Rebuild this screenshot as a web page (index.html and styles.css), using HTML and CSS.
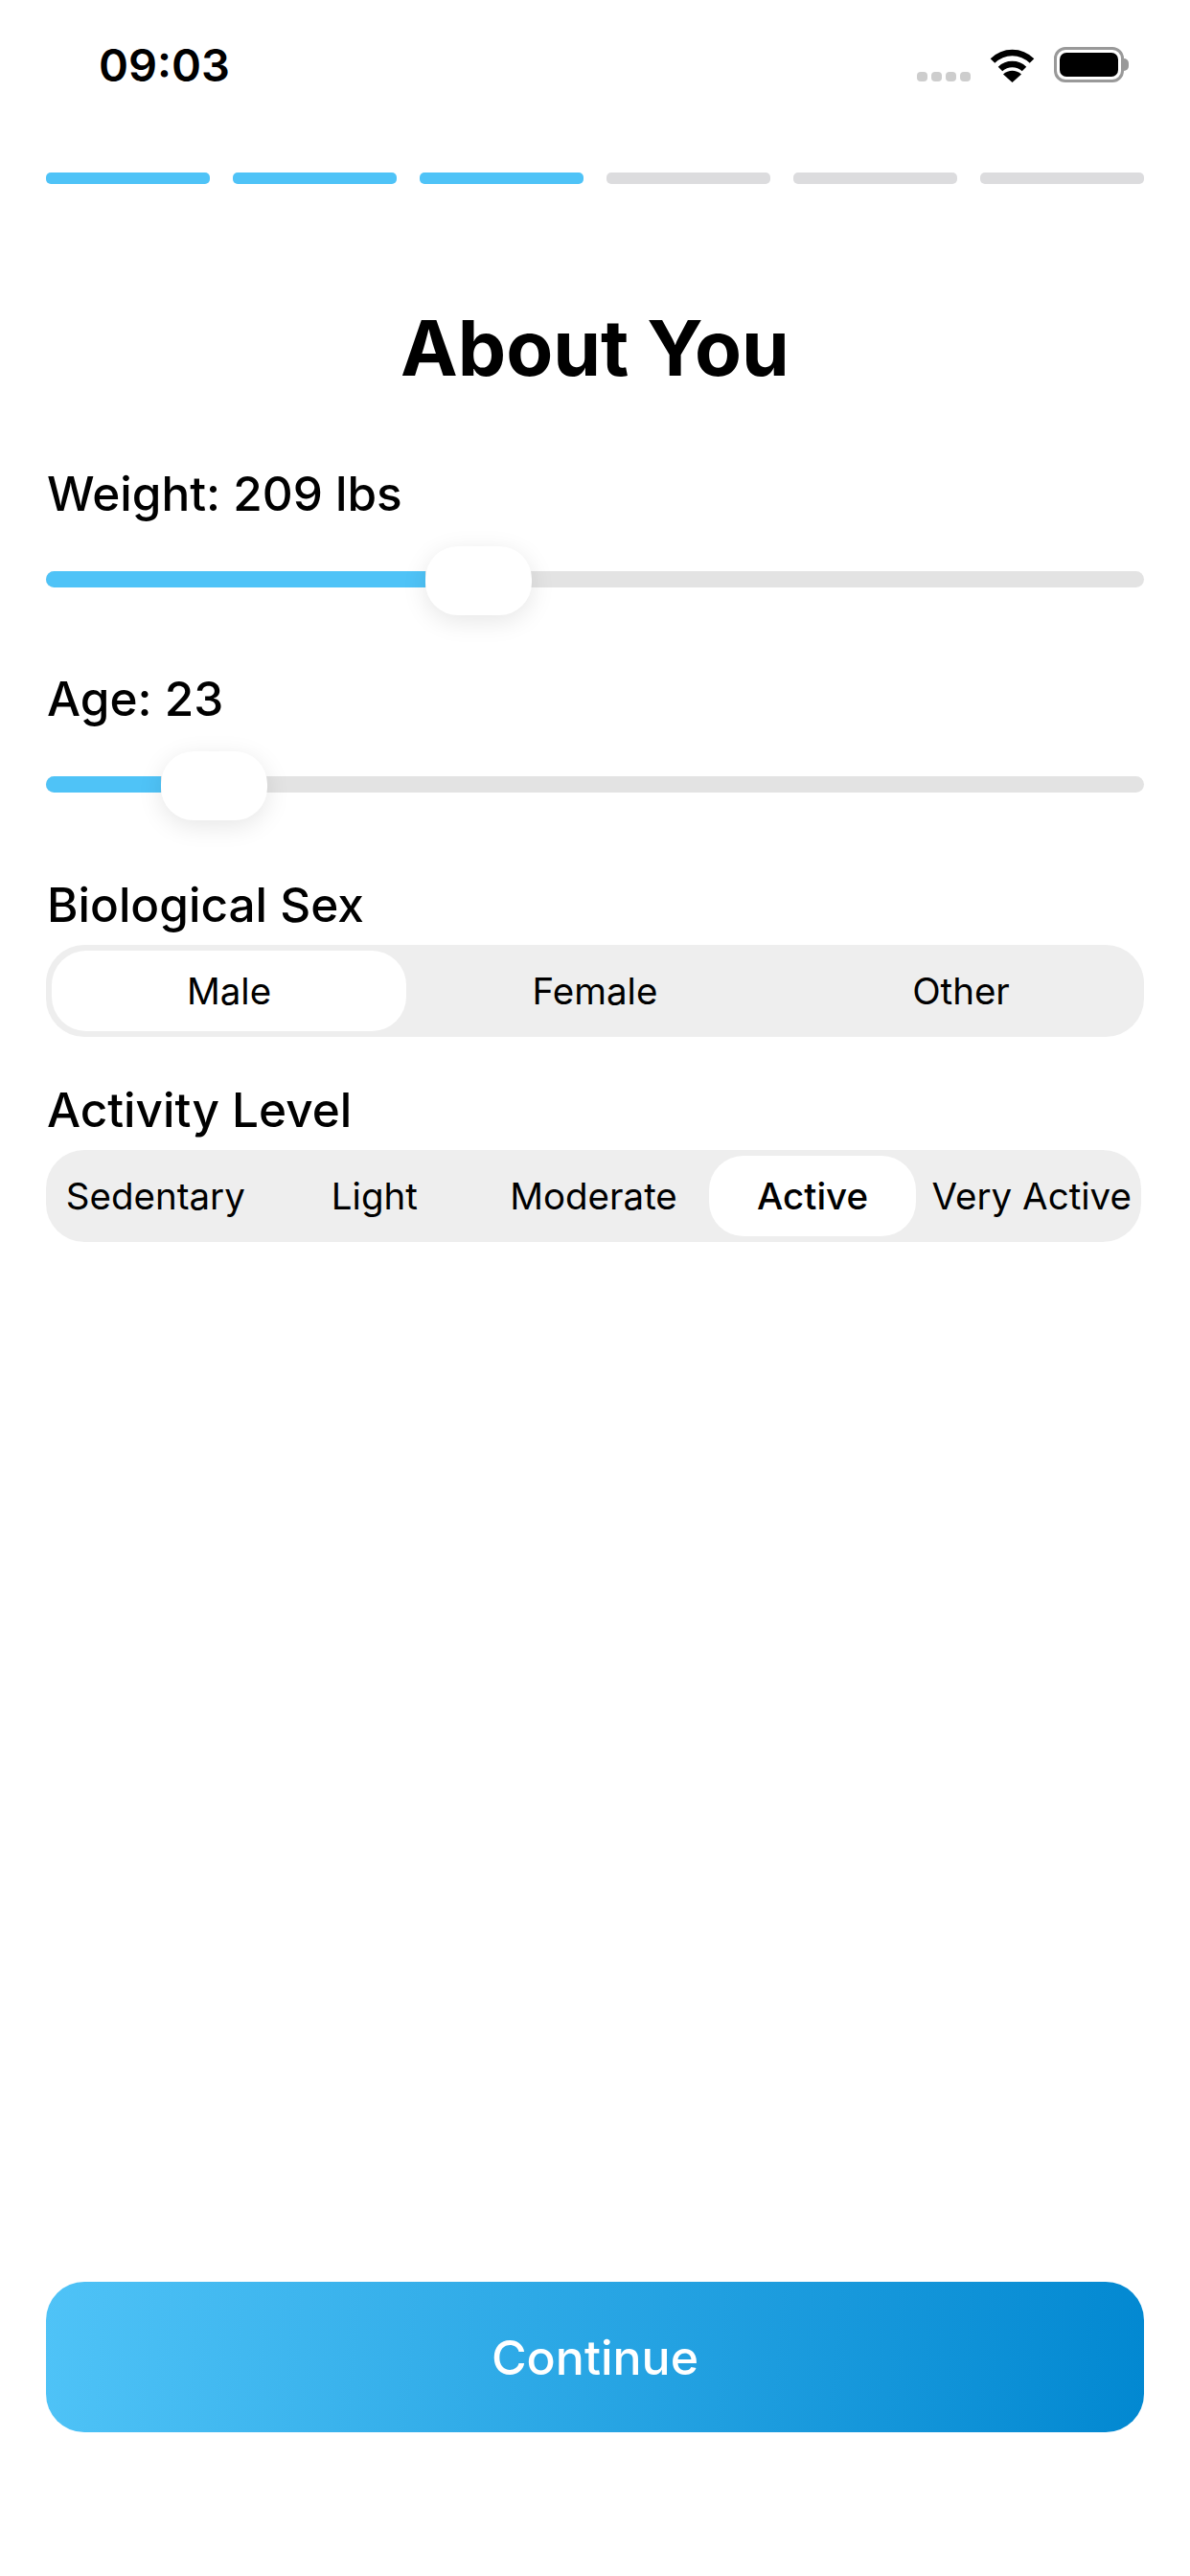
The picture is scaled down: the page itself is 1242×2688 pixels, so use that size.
FILE: index.html
```html
<!DOCTYPE html>
<html>
<head>
  <meta charset="utf-8">
  <link rel="stylesheet" href="styles.css">
</head>
<body>
  <div class="screen">
    <div class="status-bar">
      <span class="status-time">09:03</span>
      <div class="status-icons">
        <div class="signal-dots">
          <span></span><span></span><span></span><span></span>
        </div>
        <svg class="wifi" width="47" height="36" viewBox="0 0 47 36">
          <path d="M3 13.5C14.5 2 32.5 2 44 13.5" fill="none" stroke="#000" stroke-width="6.5"/>
          <path d="M11 22C18 15.3 29 15.3 36 22" fill="none" stroke="#000" stroke-width="6.5"/>
          <path d="M23.5 36L14 27.6C19.5 22.6 27.5 22.6 33 27.6Z" fill="#000"/>
        </svg>
        <div class="battery">
          <div class="battery-body"><div class="battery-level"></div></div>
          <div class="battery-nub"></div>
        </div>
      </div>
    </div>

    <div class="progress">
      <div class="progress-step done"></div>
      <div class="progress-step done"></div>
      <div class="progress-step done"></div>
      <div class="progress-step"></div>
      <div class="progress-step"></div>
      <div class="progress-step"></div>
    </div>

    <h1 class="title">About You</h1>

    <div class="field field-weight">
      <div class="field-label">Weight: 209 lbs</div>
      <div class="slider">
        <div class="slider-track"><div class="slider-fill" style="width: 396px"></div></div>
        <div class="slider-thumb" style="left: 396px"></div>
      </div>
    </div>

    <div class="field field-age">
      <div class="field-label">Age: 23</div>
      <div class="slider">
        <div class="slider-track"><div class="slider-fill" style="width: 120px"></div></div>
        <div class="slider-thumb" style="left: 120px"></div>
      </div>
    </div>

    <div class="field field-sex">
      <div class="field-label">Biological Sex</div>
      <div class="segments segments-sex">
        <div class="segment active">Male</div>
        <div class="segment">Female</div>
        <div class="segment">Other</div>
      </div>
    </div>

    <div class="field field-activity">
      <div class="field-label">Activity Level</div>
      <div class="segments segments-activity">
        <div class="segment">Sedentary</div>
        <div class="segment">Light</div>
        <div class="segment">Moderate</div>
        <div class="segment active">Active</div>
        <div class="segment">Very Active</div>
      </div>
    </div>

    <button class="continue-btn">Continue</button>
  </div>
</body>
</html>
```

FILE: styles.css
```css
* {
  box-sizing: border-box;
}

body {
  margin: 0;
  background: #fff;
  color: #000;
  font-family: Inter, "Liberation Sans", sans-serif;
}

.screen {
  display: flex;
  flex-direction: column;
  width: 1242px;
  height: 2688px;
  padding: 0 48px 150px;
}

/* Status bar */
.status-bar {
  display: flex;
  justify-content: space-between;
  align-items: flex-start;
  height: 180px;
  padding: 42px 16px 0 55px;
}

.status-time {
  font-size: 47px;
  font-weight: 600;
  line-height: 52px;
}

.status-icons {
  display: flex;
  align-items: flex-end;
  padding-top: 7px;
}

.signal-dots {
  display: flex;
  gap: 4px;
  margin-bottom: 1px;
  margin-right: 20px;
}

.signal-dots span {
  width: 11px;
  height: 10px;
  border-radius: 4px;
  background: #cdcdcd;
}

.wifi {
  display: block;
  margin-right: 20px;
}

.battery {
  display: flex;
  align-items: center;
}

.battery-body {
  width: 73px;
  height: 37px;
  padding: 3px;
  border: 3px solid #999;
  border-radius: 12px;
}

.battery-level {
  height: 100%;
  border-radius: 7px;
  background: #000;
}

.battery-nub {
  width: 5px;
  height: 13px;
  border-radius: 0 5px 5px 0;
  background: #999;
}

/* Progress steps */
.progress {
  display: flex;
  gap: 24px;
}

.progress-step {
  flex: 1;
  height: 12px;
  border-radius: 5px;
  background: #dcdcde;
}

.progress-step.done {
  background: #4fc3f7;
}

.title {
  margin: 122px 0 0;
  font-size: 80px;
  font-weight: 700;
  line-height: 97px;
  text-align: center;
}

/* Fields */
.field-label {
  padding-left: 1px;
  font-size: 49.5px;
  font-weight: 500;
  line-height: 58px;
}

.field-weight {
  margin-top: 75px;
}

.field-age {
  margin-top: 58px;
}

.field-sex {
  margin-top: 59px;
}

.field-activity {
  margin-top: 47px;
}

/* Sliders */
.slider {
  position: relative;
  height: 72px;
  margin-top: 26px;
  display: flex;
  align-items: center;
}

.slider-track {
  flex: 1;
  height: 17px;
  margin-bottom: 3px;
  border-radius: 9px;
  background: #e3e3e3;
  overflow: hidden;
}

.slider-fill {
  height: 100%;
  background: #4fc3f7;
}

.slider-thumb {
  position: absolute;
  top: 0;
  width: 111px;
  height: 72px;
  border-radius: 34px;
  background: #fff;
  box-shadow: 0 6px 26px rgba(0, 0, 0, 0.1);
}

/* Segmented controls */
.segments {
  display: flex;
  gap: 12px;
  height: 96px;
  margin-top: 13px;
  padding: 6px;
  border-radius: 40px;
  background: #eee;
}

.segments-sex {
  width: 1146px;
}

.segments-activity {
  width: 1143px;
}

.segment {
  flex: 1 1 0;
  display: flex;
  align-items: center;
  justify-content: center;
  border-radius: 36px;
  font-size: 38.5px;
  font-weight: 400;
  white-space: nowrap;
}

.segment.active {
  background: #fff;
  font-weight: 500;
}

.segments-sex .segment.active {
  font-weight: 400;
}

/* Continue button */
.continue-btn {
  margin-top: auto;
  width: 100%;
  height: 157px;
  border: none;
  border-radius: 40px;
  background: linear-gradient(95deg, #4fc3f7 0%, #0288d1 100%);
  color: #fff;
  font-family: inherit;
  font-size: 50px;
  font-weight: 500;
}
```
